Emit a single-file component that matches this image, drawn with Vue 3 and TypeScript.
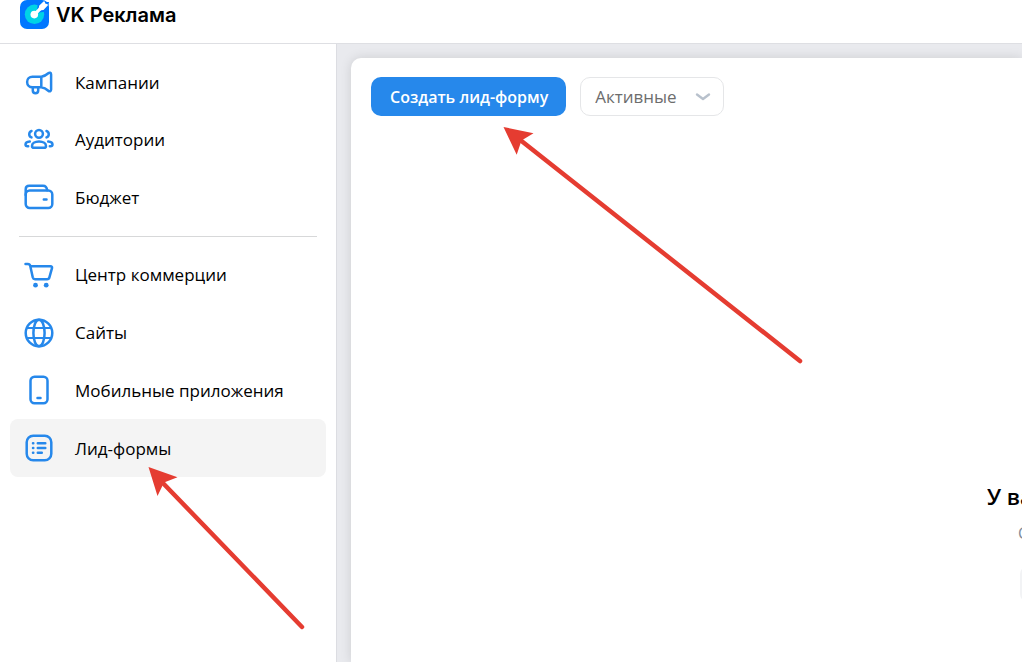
<script setup lang="ts">
import { ref } from 'vue'

interface NavItem {
  id: string
  label: string
}

const mainItems: NavItem[] = [
  { id: 'campaigns', label: 'Кампании' },
  { id: 'audiences', label: 'Аудитории' },
  { id: 'budget', label: 'Бюджет' },
]

const toolItems: NavItem[] = [
  { id: 'commerce', label: 'Центр коммерции' },
  { id: 'sites', label: 'Сайты' },
  { id: 'apps', label: 'Мобильные приложения' },
  { id: 'leads', label: 'Лид-формы' },
]

const groups: NavItem[][] = [mainItems, toolItems]
const active = ref('leads')
const status = ref('active')
</script>

<template>
  <div class="app">
    <header class="header">
      <a class="brand" href="#">
        <svg class="logo" viewBox="0 0 29 29" aria-hidden="true">
          <rect width="29" height="29" rx="7" fill="#0077ff" />
          <circle cx="14.500" cy="14.300" r="9.700" fill="#00d3e6" />
          <path d="M17 10.500 18 2 29 2 27 11.500 19 12.500Z" fill="#0077ff" />
          <path d="M14.300 14.600 22 7" stroke="#fff" stroke-width="3.200" />
          <path d="M19.200 9.800 19.800 6 24 2 24.900 4.200 27.200 5 23.200 9.200Z" fill="#fff" stroke="#fff" stroke-width="1.400" stroke-linejoin="round" />
          <circle cx="14.300" cy="14.600" r="3.800" fill="#fff" />
        </svg>
        <span>VK Реклама</span>
      </a>
    </header>

    <div class="body">
      <nav class="sidebar">
        <template v-for="(group, index) in groups" :key="index">
          <hr v-if="index > 0" class="divider" />
          <ul class="group" :class="{ tools: index > 0 }">
            <li v-for="item in group" :key="item.id" class="row">
              <a
                class="item"
                :class="{ current: item.id === active }"
                href="#"
                @click.prevent="active = item.id"
              >
                <svg class="icon" viewBox="0 0 30 30" aria-hidden="true">
                  <g v-if="item.id === 'campaigns'">
                    <path d="M17.300 8.700H8.400a5.300 5.300 0 0 0 0 10.600h8.900zM17.300 8.700c2.800-.4 5-1.700 7-3.500 1.200-1 2.800-.6 2.800 1.200v15.200c0 1.800-1.600 2.200-2.800 1.200-2-1.800-4.200-3.100-7-3.500" />
                    <path d="M8.800 19.300v3.200a2.700 2.700 0 0 0 5.400 0v-3.200" />
                  </g>
                  <g v-else-if="item.id === 'audiences'">
                    <circle cx="15" cy="8.800" r="3.900" />
                    <path d="M15 16.500c4.300 0 7 2 7 4.400 0 1.300-.8 1.900-2 1.900H10c-1.200 0-2-.6-2-1.900 0-2.400 2.700-4.400 7-4.400Z" />
                    <path d="M7.500 6a3.400 3.400 0 0 0 0 6.400M22.500 6a3.400 3.400 0 0 1 0 6.400M5.800 16.500c-2.500.2-4.300 1.500-4.300 3.100 0 1.100.7 1.700 2 1.700h.7M24.200 16.500c2.500.2 4.300 1.500 4.300 3.100 0 1.100-.7 1.700-2 1.700h-.7" />
                  </g>
                  <g v-else-if="item.id === 'budget'">
                    <rect x="1.700" y="8.500" width="26.600" height="17.500" rx="4" />
                    <path d="M1.700 13V7.200c0-2.200 1.300-3.400 3.500-3.400H19c2.500 0 3.800 1.300 4.200 4.500M19.800 17.400h2.700" />
                  </g>
                  <g v-else-if="item.id === 'commerce'">
                    <path d="M1.500 4h2.400c1.300 0 2 .6 2.300 1.800l2.600 11.700c.3 1.200 1 1.700 2.200 1.700h12.100c1.300 0 2-.6 2.300-1.800l2.600-9.200c.3-1.200-.3-1.900-1.500-1.900H6.500" />
                    <circle cx="11.500" cy="25.200" r="2.400" class="solid" />
                    <circle cx="22.200" cy="25.200" r="2.400" class="solid" />
                  </g>
                  <g v-else-if="item.id === 'sites'">
                    <circle cx="15" cy="15" r="13.300" />
                    <ellipse cx="15" cy="15" rx="5.600" ry="13.300" />
                    <path d="M3.200 10h23.600M3.200 20h23.600" class="thin" />
                  </g>
                  <g v-else-if="item.id === 'apps'">
                    <rect x="6.500" y="1.700" width="17" height="26.600" rx="4" />
                    <path d="M13.500 23h3" />
                  </g>
                  <g v-else>
                    <rect x="2.700" y="2.700" width="24.600" height="24.600" rx="6.500" />
                    <path d="M13.800 10.200h7.500M13.800 15h7.500M13.800 19.800h4M9 10.200h.3M9 15h.3M9 19.800h.3" />
                  </g>
                </svg>
                <span>{{ item.label }}</span>
              </a>
            </li>
          </ul>
        </template>
      </nav>

      <main class="content">
        <section class="panel">
          <div class="toolbar">
            <button class="create" type="button">Создать лид-форму</button>
            <div class="filter">
              <select v-model="status" class="select" aria-label="Активные">
                <option value="active">Активные</option>
              </select>
              <svg class="chevron" viewBox="0 0 16 10" aria-hidden="true">
                <path d="M2 2.500 8 7 14 2.500" />
              </svg>
            </div>
          </div>
          <div class="empty">
            <h2 class="title">У ва</h2>
            <p class="hint">С</p>
            <button class="more" type="button" aria-label="Создать"></button>
          </div>
        </section>
      </main>
    </div>

    <svg class="arrows" width="1022" height="662" viewBox="0 0 1022 662" aria-hidden="true">
      <path class="shaft" d="M519 139 800 361M160 480 302 627" />
      <path class="head" d="M503.500 127 533.500 133.300 521.500 140.500 516.700 154.700ZM148.500 467 177.500 477.300 164 482.500 157.500 496Z" />
    </svg>
  </div>
</template>

<style>
html,
body,
#app {
  height: 100%;
}

body {
  margin: 0;
  overflow: hidden;
}
</style>

<style scoped>
.app {
  position: relative;
  display: flex;
  flex-direction: column;
  height: 100%;
  overflow: hidden;
  background: #fff;
  color: #000;
  font-family: "Open Sans", "Noto Sans", sans-serif;
  font-size: 17px;
}

.header {
  flex: none;
  height: 43px;
  border-bottom: 1px solid #dedfe3;
}

.brand {
  display: inline-flex;
  align-items: flex-start;
  gap: 7px;
  padding-left: 20px;
  color: #000;
  font: 600 20px/30px Inter, sans-serif;
  text-decoration: none;
}

.logo {
  width: 29px;
  height: 29px;
}

.body {
  display: flex;
  flex: 1;
  min-height: 0;
}

.sidebar {
  box-sizing: border-box;
  flex: none;
  width: 337px;
  padding: 10px 10px 0;
  border-right: 1px solid #dcdde2;
}

.group {
  display: grid;
  grid-auto-rows: 1fr;
  height: 172px;
  margin: 0;
  padding: 0;
  list-style: none;
}

.tools {
  height: 231px;
}

.divider {
  height: 1px;
  margin: 10px 9px 9px;
  border: 0;
  background: #d7d8d9;
}

.row {
  display: flex;
}

.item {
  display: flex;
  flex: 1;
  align-items: center;
  gap: 21px;
  padding-left: 14px;
  border-radius: 8px;
  color: #000;
  text-decoration: none;
}

.current {
  background: #f4f4f4;
}

.icon {
  flex: none;
  width: 30px;
  height: 30px;
  fill: none;
  stroke: #2688eb;
  stroke-width: 2.5;
  stroke-linecap: round;
  stroke-linejoin: round;
}

.icon .solid {
  fill: #2688eb;
  stroke: none;
}

.icon .thin {
  stroke-width: 2;
}

.content {
  display: flex;
  flex: 1;
  min-width: 0;
  padding: 14px 0 0 14px;
  background: #e9eaee;
}

.panel {
  display: flex;
  flex: 1;
  flex-direction: column;
  min-width: 0;
  border-top-left-radius: 10px;
  background: #fff;
  box-shadow: 0 0 12px rgba(0, 0, 0, 0.12);
}

.toolbar {
  display: flex;
  gap: 14px;
  padding: 19px 20px 0;
}

.create {
  height: 39px;
  padding: 0 18px 0 19px;
  border: 0;
  border-radius: 10px;
  background: #2688eb;
  color: #fff;
  font: 600 16px/22px "Open Sans", "Noto Sans", sans-serif;
}

.filter {
  display: grid;
  align-items: center;
  width: 144px;
}

.select,
.chevron {
  grid-area: 1 / 1;
}

.select {
  width: 100%;
  height: 39px;
  padding: 0 14px;
  border: 1px solid #e5e6e8;
  border-radius: 10px;
  appearance: none;
  background: #fff;
  color: #6d6d6d;
  font: 17px/24px "Open Sans", "Noto Sans", sans-serif;
}

.chevron {
  justify-self: end;
  width: 16px;
  height: 10px;
  margin-right: 13px;
  fill: none;
  stroke: #b8c1cc;
  stroke-width: 2.4;
  stroke-linecap: round;
  stroke-linejoin: round;
  pointer-events: none;
}

.empty {
  display: flex;
  flex-direction: column;
  align-self: flex-end;
  width: 35px;
  margin-top: 364px;
  overflow: hidden;
  white-space: nowrap;
}

.title {
  margin: 0;
  font-size: 22px;
  font-weight: 600;
  line-height: 32px;
}

.hint {
  margin: 8px 0 0 31px;
  color: #818c99;
  font-size: 16px;
  line-height: 26px;
}

.more {
  width: 80px;
  height: 36px;
  margin: 20px 0 0 33px;
  border: 0;
  border-radius: 8px;
  background: #f2f3f5;
}

.arrows {
  position: absolute;
  top: 0;
  left: 0;
  pointer-events: none;
}

.shaft {
  fill: none;
  stroke: #e53c31;
  stroke-width: 4.5;
  stroke-linecap: round;
}

.head {
  fill: #e53c31;
}
</style>
